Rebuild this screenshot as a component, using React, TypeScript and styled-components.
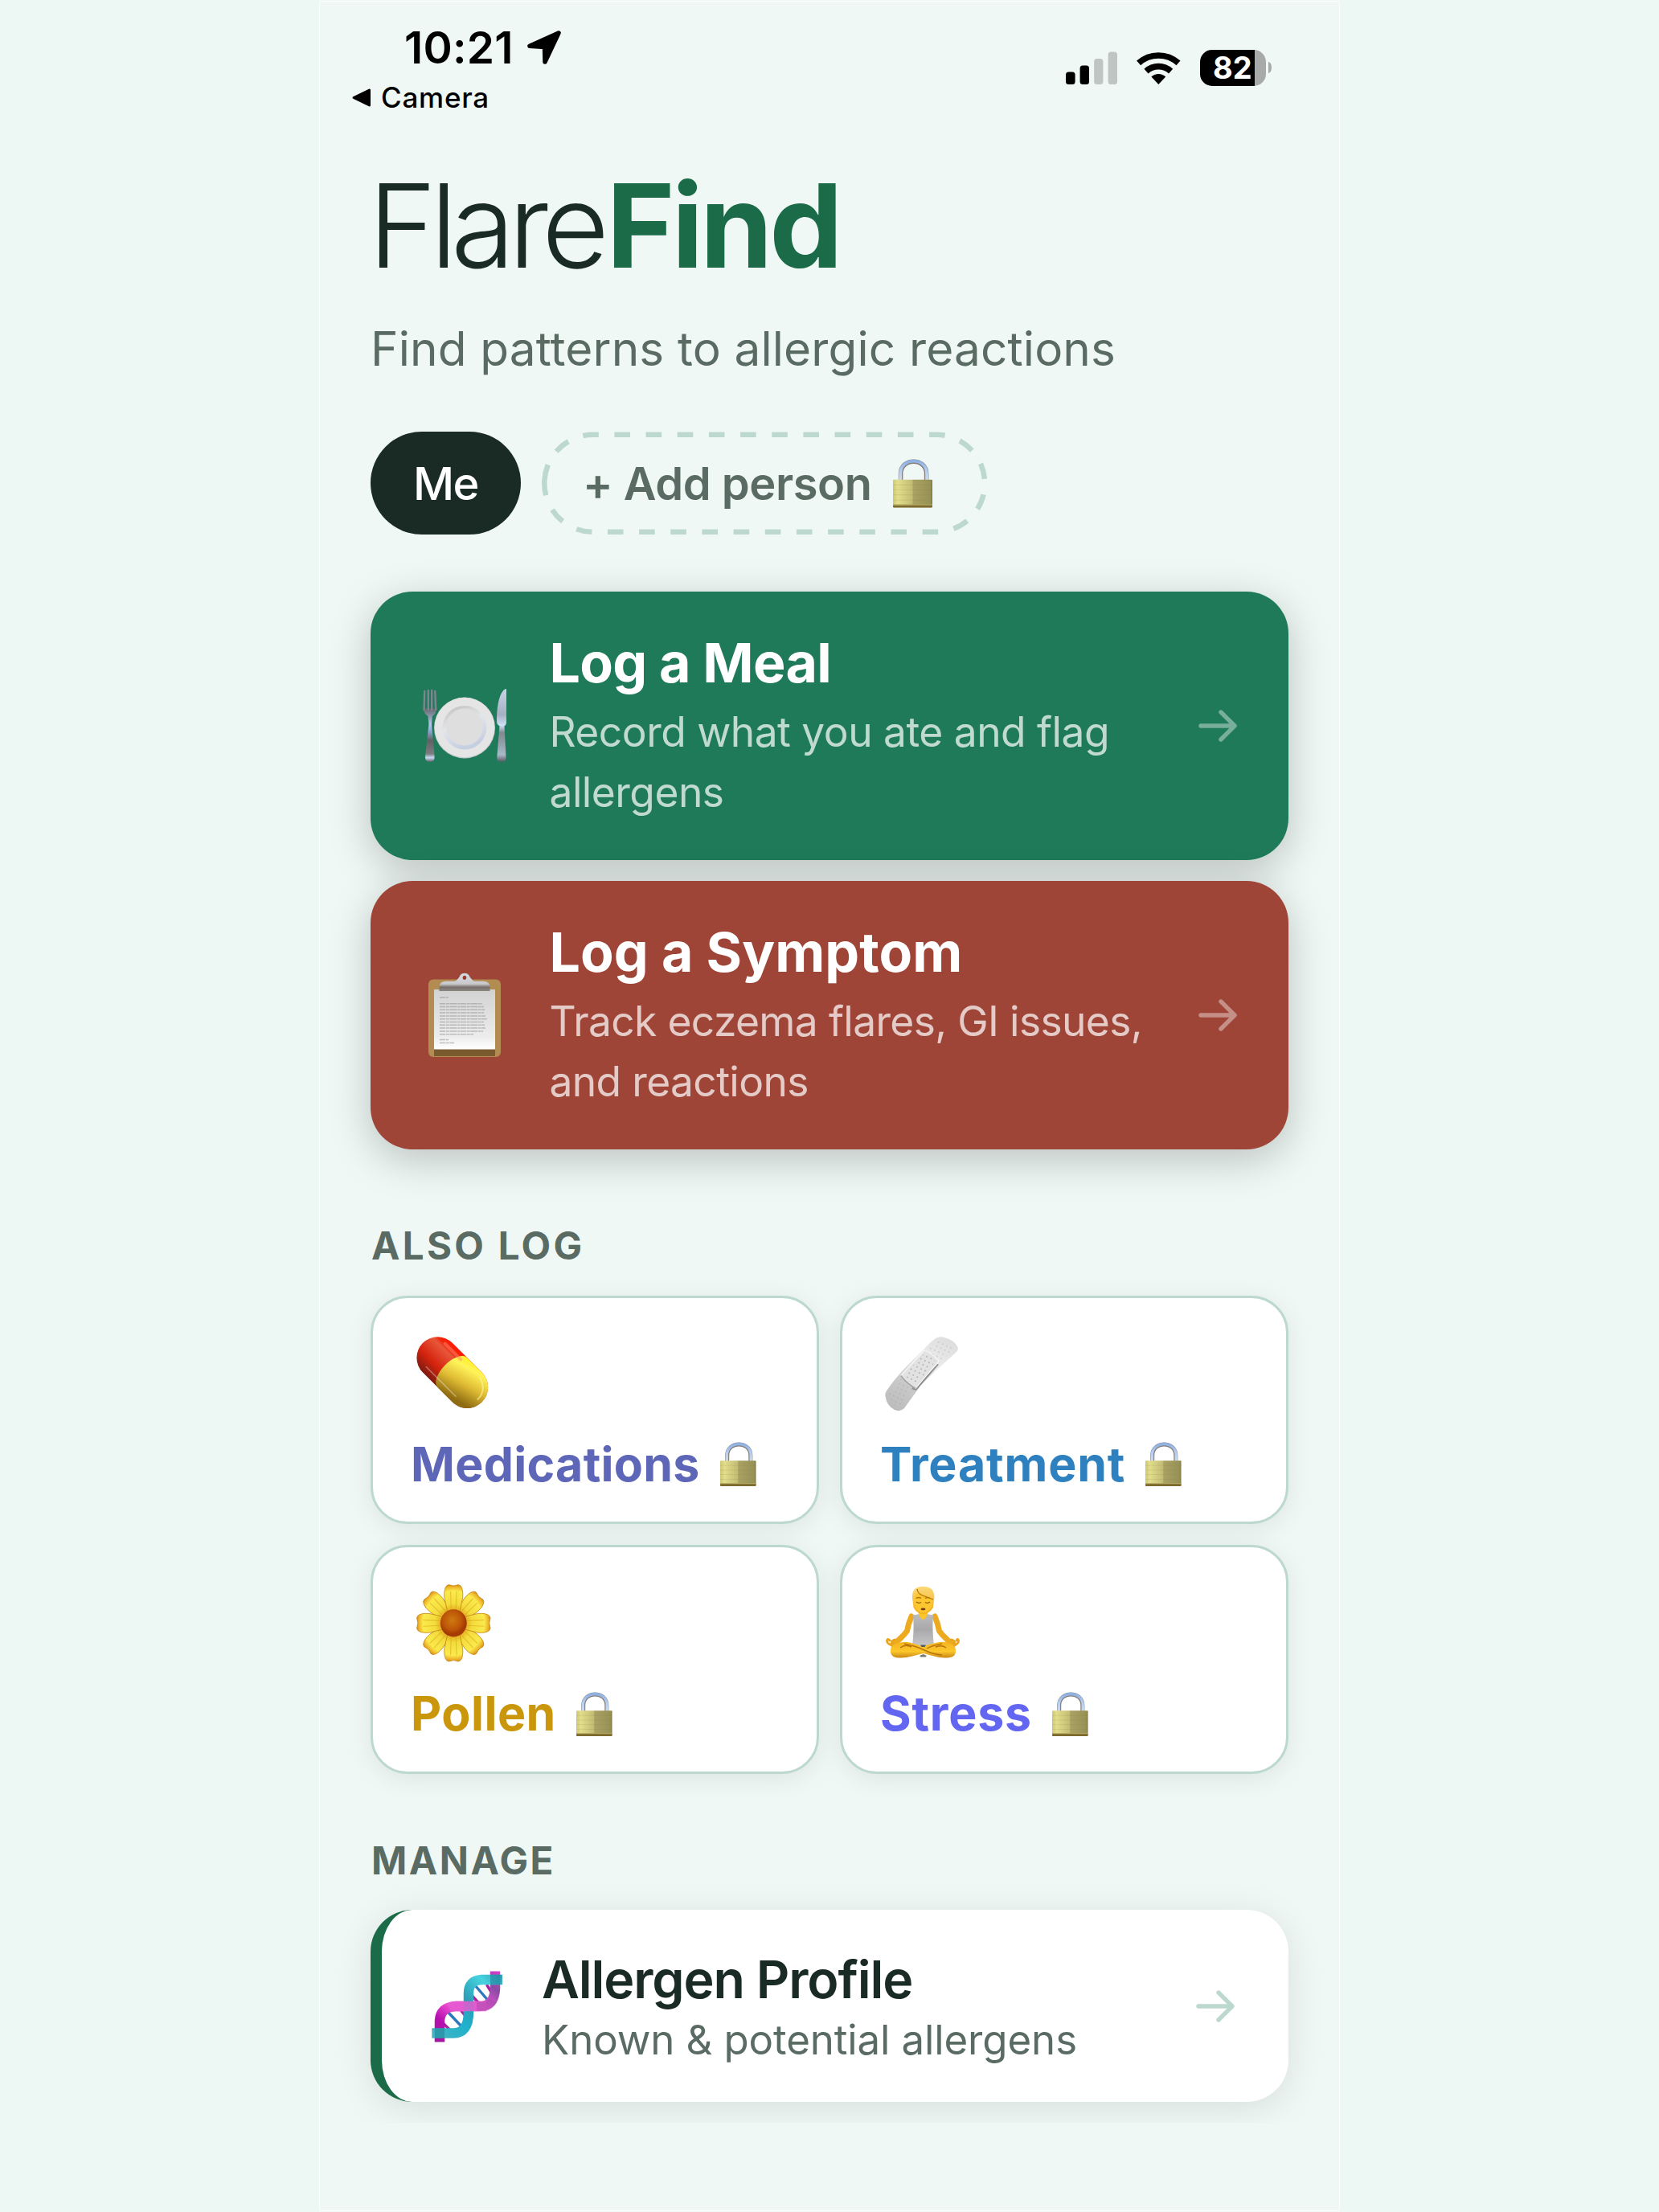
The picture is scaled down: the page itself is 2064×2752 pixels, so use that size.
import React from 'react';
import styled, { createGlobalStyle } from 'styled-components';

const GlobalStyle = createGlobalStyle`
	* {
		box-sizing: border-box;
	}
	body {
		margin: 0;
		background: #edf8f5;
		font-family: Inter, 'Liberation Sans', sans-serif;
	}
	svg {
		display: block;
		flex-shrink: 0;
		overflow: visible;
	}
`;

const Page = styled.div`
	display: flex;
	justify-content: center;
	height: 2752px;
	padding-top: 1px;
	overflow: hidden;
`;

const Phone = styled.div`
	width: 1270px;
	height: 2750px;
	border: 1px solid #fdfffe;
	background: #eff8f5;
`;

/* clips the last card's shadow above the home indicator area */
const Screen = styled.main`
	height: 2639px;
	overflow: hidden;
`;

const StatusBar = styled.header`
	display: flex;
	justify-content: space-between;
	height: 204px;
	padding: 26px 84px 0 40px;
	color: #000;
`;

const Time = styled.div`
	display: flex;
	align-items: center;
	gap: 17px;
	height: 62px;
	padding-left: 65px;
	font-size: 55px;
	font-weight: 600;
	letter-spacing: 0.2px;
	line-height: 62px;
`;

const BackLink = styled.div`
	display: flex;
	align-items: center;
	gap: 12px;
	margin-top: 9px;
	font-size: 35px;
	font-weight: 500;
	letter-spacing: 0.75px;
	line-height: 44px;
`;

const Indicators = styled.div`
	display: flex;
	align-items: center;
	gap: 24px;
	height: 46px;
	margin-top: 33px;
`;

const Battery = styled.div`
	display: flex;
	align-items: center;
	gap: 3px;
`;

const BatteryBody = styled.div`
	width: 82px;
	height: 45px;
	padding-left: 16px;
	border-radius: 15px;
	background: linear-gradient(to right, #000 68px, #a7aaa9 68px);
	color: #fff;
	font-size: 38px;
	font-weight: 700;
	line-height: 45px;
`;

const BatteryNub = styled.div`
	width: 4px;
	height: 14px;
	border-radius: 0 4px 4px 0 / 0 7px 7px 0;
	background: #a7aaa9;
`;

const Content = styled.div`
	padding: 0 63px;
`;

const Title = styled.h1`
	margin: 0 0 0 -3px;
	color: #1a2b25;
	font-size: 145px;
	font-weight: 300;
	letter-spacing: -8.1px;
	line-height: 150px;

	strong {
		margin-left: 4.5px;
		color: #1b6b48;
		font-weight: 700;
		letter-spacing: -4px;
	}
`;

const Subtitle = styled.p`
	margin: 39.5px 0 0;
	color: #5a6b64;
	font-size: 58.5px;
	letter-spacing: 0.14px;
	line-height: 76px;
`;

const People = styled.div`
	display: flex;
	gap: 26px;
	margin-top: 65px;
`;

const Person = styled.div`
	width: 187px;
	height: 128px;
	border-radius: 64px;
	background: #1a2b25;
	color: #fff;
	font-size: 56px;
	font-weight: 550;
	letter-spacing: -1.4px;
	line-height: 130px;
	text-align: center;
`;

const AddPerson = styled.div`
	position: relative;
	display: flex;
	align-items: center;
	width: 555px;
	height: 128px;
	padding: 2px 0 0 51px;
	color: #5a6b64;
	font-size: 56px;
	font-weight: 600;
	letter-spacing: -0.47px;
	white-space: nowrap;

	.outline {
		position: absolute;
		top: 0;
		left: 0;
	}
	.lock {
		margin-left: 27px;
	}
`;

const Actions = styled.div`
	display: flex;
	flex-direction: column;
	gap: 26px;
	margin-top: 71px;
`;

const Action = styled.div<{ $color: string }>`
	display: flex;
	align-items: center;
	height: 334px;
	padding: 0 64px 0 62px;
	border-radius: 52px;
	background: ${(p) => p.$color};
	box-shadow: 0 13px 52px rgba(0, 0, 0, 0.22);
	color: #fff;
`;

const ActionIcon = styled.div`
	display: flex;
	justify-content: center;
	width: 110px;
	margin-right: 50.5px;
`;

const ActionText = styled.div<{ $titleSpacing: number; $textSpacing: number }>`
	flex: 1;

	h2 {
		margin: 0 0 7px;
		font-size: 68px;
		font-weight: 700;
		letter-spacing: ${(p) => p.$titleSpacing}px;
		line-height: 84px;
	}
	p {
		margin: 0;
		color: rgba(255, 255, 255, 0.72);
		font-size: 51.5px;
		letter-spacing: ${(p) => p.$textSpacing}px;
		line-height: 75px;
		white-space: pre-line;
	}
`;

const Label = styled.h3<{ $top: number; $spacing: number }>`
	margin: ${(p) => p.$top}px 0 0 1px;
	color: #5a6b64;
	font-size: 47.5px;
	font-weight: 650;
	letter-spacing: ${(p) => p.$spacing}px;
	line-height: 58px;
`;

const Tiles = styled.div`
	display: grid;
	grid-template-columns: 1fr 1fr;
	gap: 26px;
	margin-top: 33px;
`;

const Tile = styled.div<{ $color: string; $spacing: number }>`
	height: 284.3px;
	padding: 42.5px 0 0 47px;
	border: 3px solid #bdd9cf;
	border-radius: 46px;
	background: #fff;
	box-shadow: 0 6px 32px rgba(0, 0, 0, 0.08);
	color: ${(p) => p.$color};

	& > svg {
		margin-left: 1px;
	}
	.name {
		display: flex;
		align-items: center;
		gap: 25px;
		margin-top: 28px;
		font-size: 59px;
		font-weight: 650;
		letter-spacing: ${(p) => p.$spacing}px;
		line-height: 72px;
	}
	.lock {
		margin-top: 1px;
	}
`;

const Profile = styled.div`
	display: flex;
	align-items: center;
	height: 238.3px;
	margin-top: 32.8px;
	padding: 0 67px 0 56px;
	border-left: 14px solid #1b6b48;
	border-radius: 52px;
	background: #fff;
	box-shadow: 0 8px 46px rgba(0, 0, 0, 0.1);
`;

const ProfileText = styled.div`
	flex: 1;
	padding: 8px 0 0 43px;

	h2 {
		margin: 0;
		color: #1a2b25;
		font-size: 64.5px;
		font-weight: 600;
		letter-spacing: -1.15px;
		line-height: 76px;
	}
	p {
		margin: 0;
		color: #5a6b64;
		font-size: 51px;
		letter-spacing: -0.12px;
		line-height: 74px;
	}
`;

const Arrow: React.FC<{ color: string; opacity?: number }> = ({ color, opacity }) => (
	<svg width="48" height="40" viewBox="0 0 48 40" opacity={opacity}>
		<path
			d="M3 20H44M28 3L45 20L28 37"
			fill="none"
			stroke={color}
			strokeWidth="5.4"
			strokeLinecap="round"
			strokeLinejoin="round"
		/>
	</svg>
);

const Lock: React.FC<{ width: number }> = ({ width }) => (
	<svg className="lock" width={width} height={width * 1.24} viewBox="0 0 44 54.5">
		<defs>
			<linearGradient id="lockBody">
				<stop offset="0" stopColor="#cdc675" />
				<stop offset="0.12" stopColor="#e2de8b" />
				<stop offset="0.49" stopColor="#c2bc74" />
				<stop offset="0.51" stopColor="#a9a263" />
				<stop offset="0.95" stopColor="#989155" />
				<stop offset="1" stopColor="#7f7640" />
			</linearGradient>
			<linearGradient id="lockBar" x1="0" x2="0" y1="0" y2="1">
				<stop offset="0" stopColor="#8fb0e2" />
				<stop offset="0.45" stopColor="#b3cdf2" />
				<stop offset="1" stopColor="#d3dce6" />
			</linearGradient>
		</defs>
		<path d="M8.6 25V16.5C8.6 -1.7 37.4 -1.7 37.4 16.5V25" fill="none" stroke="#85807a" strokeWidth="5" />
		<path d="M8.2 25V16.3C8.2 -2.2 37.8 -2.2 37.8 16.3V25" fill="none" stroke="url(#lockBar)" strokeWidth="3.4" />
		<rect y="23" width="44" height="31" rx="1" fill="url(#lockBody)" />
		<path d="M0 29H44M0 34.5H44M0 40H44M0 46H44" stroke="#8a8344" strokeOpacity="0.16" strokeWidth="1" />
		<rect y="51.5" width="44" height="2.8" rx="1" fill="#7d6a2f" />
		<rect y="50.6" width="44" height="1" fill="#b3a95f" />
	</svg>
);

const Plate: React.FC = () => (
	<svg width="104" height="92" viewBox="0 0 104 92">
		<defs>
			<linearGradient id="fork" x1="0" x2="0" y1="0" y2="1">
				<stop offset="0" stopColor="#5f6468" />
				<stop offset="0.3" stopColor="#b5c8ea" />
				<stop offset="0.42" stopColor="#8fa9d6" />
				<stop offset="0.6" stopColor="#5f6163" />
				<stop offset="0.85" stopColor="#7b7d80" />
				<stop offset="0.92" stopColor="#c8daf4" />
				<stop offset="1" stopColor="#5f5f63" />
			</linearGradient>
			<linearGradient id="knife" x1="0" x2="0" y1="0" y2="1">
				<stop offset="0" stopColor="#c9d4e8" />
				<stop offset="0.35" stopColor="#a4afc0" />
				<stop offset="0.5" stopColor="#cfdff5" />
				<stop offset="0.6" stopColor="#808890" />
				<stop offset="0.9" stopColor="#a9b9c8" />
				<stop offset="1" stopColor="#55575c" />
			</linearGradient>
			<linearGradient id="well" x1="0" x2="0.4" y1="0" y2="1">
				<stop offset="0" stopColor="#bdbdbd" />
				<stop offset="0.5" stopColor="#e3e6ea" />
				<stop offset="1" stopColor="#c5cfe2" />
			</linearGradient>
		</defs>
		<path d="M1 24Q1 31 6.5 34L7.5 44L3 84Q2.6 91 8.7 91Q15 91 14.6 84L11 44L12 34Q17 31 17 24Z" fill="url(#fork)" />
		<path d="M2.2 3L1.6 26M6.8 2V26M11.2 2V26M15.2 3L16.2 26" stroke="#7d868e" strokeWidth="2.4" strokeLinecap="round" />
		<path d="M104 0C97 1 92 17 92 40Q92 45 95.5 46L92.3 85Q92 91 98 91Q103.8 91 103.5 85L101.5 46Q104 45 104 42Z" fill="url(#knife)" />
		<circle cx="52" cy="48.5" r="38" fill="#c9ccd2" />
		<circle cx="52" cy="48" r="37.2" fill="#e5e5e5" />
		<circle cx="52" cy="48.3" r="27.3" fill="url(#well)" />
		<circle cx="52" cy="47.5" r="23" fill="#dedede" />
	</svg>
);

const Clipboard: React.FC = () => (
	<svg width="90" height="106" viewBox="0 0 90 106">
		<defs>
			<linearGradient id="paper" x1="0" x2="0" y1="0" y2="1">
				<stop offset="0" stopColor="#d2d2d3" />
				<stop offset="0.8" stopColor="#ededed" />
				<stop offset="1" stopColor="#fff" />
			</linearGradient>
			<linearGradient id="clip" x1="0" x2="0" y1="0" y2="1">
				<stop offset="0" stopColor="#d5dce4" />
				<stop offset="0.6" stopColor="#c9c9cb" />
				<stop offset="0.78" stopColor="#77706a" />
				<stop offset="1" stopColor="#8d8781" />
			</linearGradient>
		</defs>
		<rect y="8.5" width="90" height="96.5" rx="6" fill="#b38c52" />
		<rect x="7" y="90" width="76" height="14" fill="#7a5a2f" />
		<rect x="7" y="21" width="76" height="74.5" fill="url(#paper)" />
		<path
			d="M14 31H25M14 38.7H67M14 42.5H69M14 46.3H70M14 50.1H69M14 53.9H71M14 57.7H73M14 61.5H69M14 65.3H70M14 69.1H71M14 72.9H68M14 76.7H56M14 83.5H25M14 87.5H32"
			stroke="#8b8b8b"
			strokeOpacity="0.5"
			strokeWidth="1.5"
			strokeDasharray="7 0.8 4 0.7 9 0.8 3 0.6"
		/>
		<path d="M32 11Q37 9.5 38.3 6A6.9 6.9 0 0 1 51.7 6Q53 9.5 58 11Z" fill="#b3bfd0" />
		<path d="M13.5 23V17Q14 11 22 10.7H34L39.5 4.5A6 6 0 0 1 50.5 4.5L56 10.7H68Q76 11 76.5 17V23Z" fill="url(#clip)" />
		<ellipse cx="45" cy="6.3" rx="2.3" ry="2.6" fill="#9e3b2c" />
	</svg>
);

const Pill: React.FC = () => (
	<svg width="100" height="100" viewBox="0 0 100 100">
		<defs>
			<linearGradient id="pillRed" x1="0" x2="0" y1="0" y2="1">
				<stop offset="0" stopColor="#ff1c05" />
				<stop offset="0.14" stopColor="#f02308" />
				<stop offset="0.24" stopColor="#e8573a" />
				<stop offset="0.65" stopColor="#d5240e" />
				<stop offset="1" stopColor="#7d1b10" />
			</linearGradient>
			<linearGradient id="pillYellow" x1="0" x2="0.35" y1="0" y2="1">
				<stop offset="0" stopColor="#ffef10" />
				<stop offset="0.25" stopColor="#fff45a" />
				<stop offset="0.6" stopColor="#e0bc34" />
				<stop offset="1" stopColor="#8f6c11" />
			</linearGradient>
		</defs>
		<g transform="translate(50.8 49.6) rotate(45)">
			<rect x="-52" y="-26" width="104" height="52" rx="26" fill="url(#pillRed)" />
			<path d="M0 -26A13 26 0 0 0 0 26H26A26 26 0 0 0 26 -26Z" fill="url(#pillYellow)" />
			<path d="M-28 18H24" stroke="#fff" strokeOpacity="0.35" strokeWidth="1.6" strokeLinecap="round" />
			<path d="M28 -20Q46 -15 46 2" fill="none" stroke="#fff9a0" strokeOpacity="0.55" strokeWidth="2" />
			<path d="M-32 -19H-4" stroke="#ff8a70" strokeOpacity="0.5" strokeWidth="4" strokeLinecap="round" />
		</g>
	</svg>
);

const Bandage: React.FC = () => (
	<svg width="100" height="100" viewBox="0 0 100 100">
		<defs>
			<linearGradient id="strip" x1="0.8" x2="0.2" y1="0" y2="1">
				<stop offset="0" stopColor="#dedede" />
				<stop offset="0.35" stopColor="#ececec" />
				<stop offset="0.7" stopColor="#c9c9c9" />
				<stop offset="1" stopColor="#bdbdbd" />
			</linearGradient>
			<pattern id="holes" width="5.6" height="5.6" patternUnits="userSpaceOnUse" patternTransform="rotate(25)">
				<circle cx="2.8" cy="2.8" r="0.8" fill="#8f8f8f" />
			</pattern>
		</defs>
		<path
			d="M68 7Q73 4 79 6Q91 9 95.5 18Q97 21 93 25Q66 49 50 65Q42 76 29 94Q24 99 17 96Q7 91 5.5 79Q5 74 8 71Q22 50 53 21Q61 12 68 7Z"
			fill="url(#strip)"
		/>
		<path
			d="M70 10Q74 8 80 10L91 19Q90 22 70 40L54 26ZM24 56L40 68L25 91Q20 92 17 91Q10 86 9 78Z"
			fill="url(#holes)"
			opacity="0.5"
		/>
		<path d="M71 39L43.5 70.5L39 69" fill="none" stroke="#8e8e8e" strokeWidth="2.4" strokeLinejoin="round" />
		<path d="M24.7 53.5L54 22Q64 25 72 36Q57 52 43 69.5Q32 63 24.7 53.5Z" fill="#e2e2e2" stroke="#f7f7f7" strokeWidth="1.2" />
		<path d="M24.7 53.5Q32 63 43 69.5" fill="none" stroke="#a2a2a2" strokeWidth="1.6" />
		<path d="M29 52L54 26Q62 29 68 36L43 65Q34 60 29 52Z" fill="url(#holes)" />
	</svg>
);

const Flower: React.FC = () => (
	<svg width="100" height="100" viewBox="0 0 100 100">
		<defs>
			<radialGradient id="petal" gradientUnits="userSpaceOnUse" cx="0" cy="0" r="49">
				<stop offset="0.3" stopColor="#e2a51b" />
				<stop offset="0.5" stopColor="#f3dc3c" />
				<stop offset="0.82" stopColor="#fbea4c" />
				<stop offset="0.93" stopColor="#ecb52a" />
				<stop offset="1" stopColor="#d48312" />
			</radialGradient>
			<radialGradient id="core" cx="0.45" cy="0.4">
				<stop offset="0" stopColor="#cf7a10" />
				<stop offset="0.7" stopColor="#bd5508" />
				<stop offset="1" stopColor="#a43a04" />
			</radialGradient>
		</defs>
		<g transform="translate(52.3 51.3) scale(0.95 0.99)">
			{[45, 135, 225, 315, 0, 90, 180, 270].map((angle) => (
				<g key={angle} transform={`rotate(${angle})`}>
					<path
						d="M-7.5 -12L-12 -32Q-12.8 -43 -9 -47Q-6.5 -49 -3.5 -47.5Q0 -46 3.5 -47.5Q6.5 -49 9 -47Q12.8 -43 12 -32L7.5 -12Z"
						fill="url(#petal)"
						stroke="#c98a18"
						strokeWidth="0.9"
					/>
					<path d="M-3 -16L-4 -40M3 -16L4 -40" stroke="#d9a51c" strokeOpacity="0.55" strokeWidth="1.2" />
				</g>
			))}
			<circle r="17.3" fill="url(#core)" />
		</g>
	</svg>
);

const Lotus: React.FC = () => (
	<svg width="100" height="100" viewBox="0 0 100 100">
		<defs>
			<linearGradient id="skin" x1="0" x2="0" y1="0" y2="1">
				<stop offset="0" stopColor="#f3b51f" />
				<stop offset="0.6" stopColor="#fcc72c" />
				<stop offset="1" stopColor="#c98612" />
			</linearGradient>
			<linearGradient id="hair" x1="0" x2="0" y1="0" y2="1">
				<stop offset="0" stopColor="#fbd878" />
				<stop offset="1" stopColor="#f5af18" />
			</linearGradient>
			<linearGradient id="shirt" x1="0" x2="0" y1="0" y2="1">
				<stop offset="0" stopColor="#bcbcbe" />
				<stop offset="0.5" stopColor="#a9a9ab" />
				<stop offset="1" stopColor="#c5c5c7" />
			</linearGradient>
		</defs>
		<path
			d="M38 43Q34 52 32.5 61Q26 70 15 78M67 43Q71 52 72.5 61Q79 70 90 78"
			fill="none"
			stroke="#edaa1e"
			strokeWidth="7"
			strokeLinecap="round"
			strokeLinejoin="round"
		/>
		<path
			d="M14 79Q7 77 7.5 73Q8.5 70 11 73M14 77Q12 73 17 72M91 79Q97 77 96.5 73Q95.5 70 94 73M91 77Q93 73 88 72"
			fill="none"
			stroke="#e9a31c"
			strokeWidth="2.8"
			strokeLinecap="round"
		/>
		<rect x="47" y="33" width="11" height="14" fill="#e9a61c" />
		<path d="M40 41Q45 41 46.5 40Q52.5 52 58.5 40Q60 41 65 41Q63.5 60 66 79H39Q41.5 60 40 41Z" fill="url(#shirt)" />
		<path d="M46.5 39Q52.5 55 58.5 39Z" fill="#fcc52b" />
		<path
			d="M12 84Q13 77 24 75.5Q30 74 36 75.5Q44 78 52 80Q62 77 70 75.5Q78 74 84 76Q92 78 93 84Q94 93 86 94Q76 95.5 66 92.5L52.5 89L39 92.5Q28 95.5 18 94Q11 92 12 84Z"
			fill="url(#skin)"
		/>
		<path d="M49 78.5H56L54.5 81H50.5Z" fill="#4e5a68" />
		<path
			d="M29 77Q44 80 54 85Q64 90 76 91M76 77Q64 79 57 83M24 82Q30 77 38 81M81 82Q76 78 68 81"
			fill="none"
			stroke="#b8730f"
			strokeWidth="1.4"
		/>
		<path d="M48 92L52.5 90L57 92L55.5 93.5H49.5Z" fill="#7c7a70" />
		<path d="M39 20Q38 5.7 52.3 5.7Q67 5.7 66.3 20L65 32Q60 40 52.3 40Q45 40 40.5 32Z" fill="url(#hair)" />
		<path d="M42 20Q43 14 47 13Q54 19 64 21L63 30Q59 38.5 52.3 38.5Q45.5 38.5 42.5 30Z" fill="#fcc62f" />
		<path d="M45 9Q46 15 52 17Q60 20 65 22" fill="none" stroke="#b1720e" strokeWidth="1.3" />
		<path d="M43.5 20.5Q47 18.5 50 20.5M55 20.5Q58 18.5 61 20.5" fill="none" stroke="#b4750f" strokeWidth="1.3" />
		<path d="M44 25Q47 27.3 50 25.6M55 25.6Q58 27.3 61 25" fill="none" stroke="#8a5a10" strokeWidth="1.2" />
		<ellipse cx="52.5" cy="34" rx="3" ry="1.4" fill="#7b3f12" />
	</svg>
);

const Dna: React.FC = () => (
	<svg width="100" height="100" viewBox="0 0 100 100">
		<defs>
			<linearGradient id="cyan" gradientUnits="userSpaceOnUse" x1="94" y1="10" x2="6" y2="90">
				<stop offset="0" stopColor="#2f9fb4" />
				<stop offset="0.2" stopColor="#46d3e0" />
				<stop offset="0.45" stopColor="#2b9fb6" />
				<stop offset="0.65" stopColor="#1fb1cd" />
				<stop offset="1" stopColor="#4ab6bf" />
			</linearGradient>
			<linearGradient id="pink" gradientUnits="userSpaceOnUse" x1="88" y1="6" x2="14" y2="95">
				<stop offset="0" stopColor="#d93ccc" />
				<stop offset="0.16" stopColor="#8a4ba3" />
				<stop offset="0.36" stopColor="#e052d0" />
				<stop offset="0.6" stopColor="#f255d6" />
				<stop offset="0.8" stopColor="#b50fae" />
				<stop offset="1" stopColor="#a3189c" />
			</linearGradient>
		</defs>
		<path d="M51 31L69 51M75 24L83 37M43 56L52 67M16 67L33.5 84" stroke="#ab1fa0" strokeWidth="3.4" strokeLinecap="round" />
		<path d="M60 24L79 46M26 57L45 77" stroke="#2b78bd" strokeWidth="3.4" strokeLinecap="round" />
		<path d="M85 6.5V28Q84 50 66 50H60" fill="none" stroke="url(#pink)" strokeWidth="12.5" />
		<path d="M60 50H36Q17 51 16 68V94.5" fill="none" stroke="url(#pink)" strokeWidth="12.5" />
		<path d="M94 17H68Q52 18 52 34V57Q52 83.5 33 83.5H6.3" fill="none" stroke="url(#cyan)" strokeWidth="12.5" />
		<path d="M74 50H36Q32 50 28 52" fill="none" stroke="#e45bd0" strokeOpacity="0.85" strokeWidth="12.5" />
		<path d="M62 50H74Q79 48 82 43" fill="none" stroke="#a04aa5" strokeOpacity="0.45" strokeWidth="11" />
		<path d="M79 10.7H91.5V23H79ZM9.8 77.3H22V89.7H9.8Z" fill="#1d7f98" fillOpacity="0.55" />
	</svg>
);

const SignalIcons: React.FC = () => (
	<>
		<svg width="64" height="41" viewBox="0 0 64 41">
			<rect y="25.5" width="11.6" height="15.5" rx="3.5" />
			<rect x="17.6" y="17.5" width="11.4" height="23.5" rx="3.5" />
			<rect x="35.2" y="9" width="11.2" height="32" rx="3.5" fill="#bfc5c3" />
			<rect x="52.6" y="0.5" width="11.4" height="40.5" rx="3.5" fill="#bfc5c3" />
		</svg>
		<svg width="55" height="41" viewBox="0 0 55 41">
			<path d="M2.6 14.4A37 37 0 0 1 52 14.4M12 24.6A22.7 22.7 0 0 1 42.6 24.6" fill="none" stroke="#000" strokeWidth="7.6" />
			<path d="M27.3 41L18.4 31.5A13 13 0 0 1 36.2 31.5Z" />
		</svg>
	</>
);

interface ActionCardProps {
	color: string;
	icon: React.ReactNode;
	title: string;
	titleSpacing: number;
	text: string;
	textSpacing: number;
}

const ActionCard: React.FC<ActionCardProps> = ({ color, icon, title, titleSpacing, text, textSpacing }) => (
	<Action $color={color}>
		<ActionIcon>{icon}</ActionIcon>
		<ActionText $titleSpacing={titleSpacing} $textSpacing={textSpacing}>
			<h2>{title}</h2>
			<p>{text}</p>
		</ActionText>
		<Arrow color="#fff" opacity={0.4} />
	</Action>
);

const tiles = [
	{ name: 'Medications', color: '#5e66b8', spacing: 0.3, icon: <Pill /> },
	{ name: 'Treatment', color: '#2e80bf', spacing: 0.85, icon: <Bandage /> },
	{ name: 'Pollen', color: '#c9960c', spacing: 0.5, icon: <Flower /> },
	{ name: 'Stress', color: '#6366f1', spacing: 0.8, icon: <Lotus /> },
];

const App: React.FC = () => {
	return (
		<Page>
			<GlobalStyle />
			<Phone>
				<Screen>
					<StatusBar>
						<div>
							<Time>
								10:21
								<svg width="42" height="42" viewBox="0 0 42 42">
									<path d="M39 3L3 19.3L21.5 20.5L22 39Z" stroke="#000" strokeWidth="5.5" strokeLinejoin="round" />
								</svg>
							</Time>
							<BackLink>
								<svg width="24" height="23" viewBox="0 0 24 23">
									<path d="M2 11.5L21.5 2V21Z" stroke="#000" strokeWidth="3" strokeLinejoin="round" />
								</svg>
								Camera
							</BackLink>
						</div>
						<Indicators>
							<SignalIcons />
							<Battery>
								<BatteryBody>82</BatteryBody>
								<BatteryNub />
							</Battery>
						</Indicators>
					</StatusBar>
					<Content>
						<Title>
							Flare<strong>Find</strong>
						</Title>
						<Subtitle>Find patterns to allergic reactions</Subtitle>
						<People>
							<Person>Me</Person>
							<AddPerson>
								<svg className="outline" width="555" height="128" viewBox="0 0 555 128">
									<path
										d="M3.4 60.3A60.5 60.5 0 0 1 63.7 3.8H490.7A60.5 60.5 0 0 1 490.7 124.8H63.7A60.5 60.5 0 0 1 3.4 60.3"
										fill="none"
										stroke="#bdd9cf"
										strokeWidth="6.5"
										strokeDasharray="19.6 19.57"
									/>
								</svg>
								+ Add person
								<Lock width={49} />
							</AddPerson>
						</People>
						<Actions>
							<ActionCard
								color="#1f7a5a"
								icon={<Plate />}
								title="Log a Meal"
								titleSpacing={-0.68}
								text={'Record what you ate and flag\nallergens'}
								textSpacing={-0.52}
							/>
							<ActionCard
								color="#9e4537"
								icon={<Clipboard />}
								title="Log a Symptom"
								titleSpacing={0.05}
								text={'Track eczema flares, GI issues,\nand reactions'}
								textSpacing={-0.64}
							/>
						</Actions>
						<Label $top={91.5} $spacing={3.3}>
							ALSO LOG
						</Label>
						<Tiles>
							{tiles.map(({ name, color, spacing, icon }) => (
								<Tile key={name} $color={color} $spacing={spacing}>
									{icon}
									<div className="name">
										{name}
										<Lock width={44.5} />
									</div>
								</Tile>
							))}
						</Tiles>
						<Label $top={79} $spacing={2.5}>
							MANAGE
						</Label>
						<Profile>
							<Dna />
							<ProfileText>
								<h2>Allergen Profile</h2>
								<p>Known &amp; potential allergens</p>
							</ProfileText>
							<Arrow color="#bdd9cf" />
						</Profile>
					</Content>
				</Screen>
			</Phone>
		</Page>
	);
};

export default App;
